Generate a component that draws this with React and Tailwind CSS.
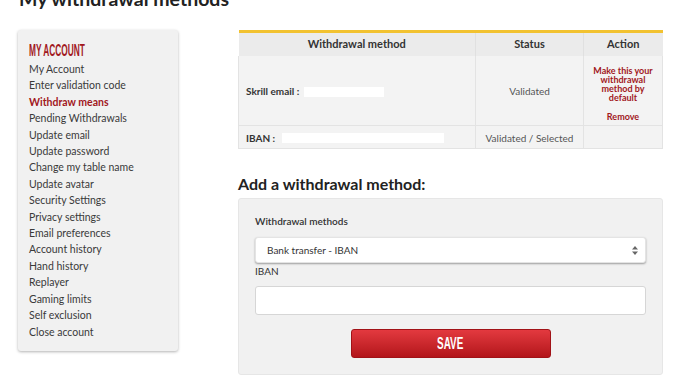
const menu = [
  "My Account",
  "Enter validation code",
  "Withdraw means",
  "Pending Withdrawals",
  "Update email",
  "Update password",
  "Change my table name",
  "Update avatar",
  "Security Settings",
  "Privacy settings",
  "Email preferences",
  "Account history",
  "Hand history",
  "Replayer",
  "Gaming limits",
  "Self exclusion",
  "Close account",
];

function Sidebar() {
  return (
    <div className="self-start w-[160px] shrink-0 bg-[#f1f1f1] rounded-[3px] shadow-[0_1px_3px_rgba(0,0,0,0.3)] pl-[11px] pt-[11px] pb-[11px]">
      <div className="text-[#a1181d] text-[16px] leading-[19px] mb-[1px] font-bold font-['Liberation_Sans',sans-serif] origin-left scale-x-[0.52] whitespace-nowrap">
        MY ACCOUNT
      </div>
      <ul>
        {menu.map((m) => (
          <li
            key={m}
            className={`text-[10.5px] leading-[16.4px] whitespace-nowrap ${m === "Withdraw means" ? "text-[#a1181d] font-bold" : "text-[#3a3a3a]"}`}
          >
            {m}
          </li>
        ))}
      </ul>
    </div>
  );
}

function MethodsTable() {
  return (
    <table className="w-[425px] border-collapse text-[10px] text-[#333] border-t-[3px] border-[#f2c230]">
      <thead>
        <tr className="bg-[#ebebeb] h-[24px]">
          <th className="w-[237px] font-bold text-[11px] border-r border-[#e0e0e0]">Withdrawal method</th>
          <th className="w-[108px] font-bold text-[11px] border-r border-[#e0e0e0]">Status</th>
          <th className="font-bold text-[11px]">Action</th>
        </tr>
      </thead>
      <tbody>
        <tr className="bg-[#f3f3f3] h-[70px] border-b border-[#e3e3e3]">
          <td className="pl-[7px] pt-[3px] border-r border-[#e3e3e3] border-l">
            <div className="flex items-center">
              <span className="font-bold">Skrill email :</span>
              <span className="ml-[5px] w-[80px] h-[10px] bg-white"></span>
            </div>
          </td>
          <td className="text-center pt-[3px] text-[#555] border-r border-[#e3e3e3]">Validated</td>
          <td className="text-center text-[#a1181d] font-bold text-[9px] leading-[9.3px] px-[8px] pt-[6px] border-r border-[#e3e3e3]">
            <div>Make this your withdrawal method by default</div>
            <div className="mt-[9px]">Remove</div>
          </td>
        </tr>
        <tr className="bg-[#f3f3f3] h-[23px] border-b border-[#e3e3e3]">
          <td className="pl-[7px] pt-[2px] border-r border-l border-[#e3e3e3]">
            <div className="flex items-center">
              <span className="font-bold">IBAN :</span>
              <span className="ml-[7px] w-[162px] h-[10px] bg-white"></span>
            </div>
          </td>
          <td className="text-center pt-[2px] text-[#555] border-r border-[#e3e3e3]">Validated / Selected</td>
          <td className="border-r border-[#e3e3e3]"></td>
        </tr>
      </tbody>
    </table>
  );
}

function AddForm() {
  return (
    <div className="w-[425px] bg-[#f1f1f1] border border-[#e6e6e6] rounded-[3px] px-[16px] pt-[16px] pb-[16px]">
      <div className="text-[10px] font-semibold text-[#333] leading-[13px]">Withdrawal methods</div>
      <div className="mt-[9px] h-[26px] bg-white rounded-[3px] border border-[#e4e4e4] shadow-[0_1px_2px_rgba(0,0,0,0.35)] flex items-center justify-between pl-[11px] pr-[6px]">
        <span className="text-[10px] text-[#333]">Bank transfer - IBAN</span>
        <svg width="8" height="11" viewBox="0 0 8 11" className="text-[#666]">
          <path d="M4 1 L7 4.5 L1 4.5 Z" fill="currentColor" />
          <path d="M4 10 L7 6.5 L1 6.5 Z" fill="currentColor" />
        </svg>
      </div>
      <div className="mt-[2px] text-[10px] text-[#333] leading-[13px]">IBAN</div>
      <div className="mt-[8px] h-[29px] bg-white rounded-[3px] border border-[#d6d6d6]"></div>
      <div className="mt-[14px] flex justify-center">
        <button className="w-[200px] h-[29px] rounded-[3px] bg-gradient-to-b from-[#e3393f] to-[#b3141a] border border-[#a11217] text-white flex items-center justify-center">
          <span className="inline-block text-[16px] leading-[16px] font-bold font-['Liberation_Sans',sans-serif] scale-x-[0.62]">SAVE</span>
        </button>
      </div>
    </div>
  );
}

export default function App() {
  return (
    <div className="w-[700px] h-[383px] overflow-hidden bg-white font-['Lato','Open_Sans',sans-serif]">
      <h1 className="mt-[-13px] ml-[19px] text-[19.5px] leading-[24px] font-bold text-[#222]">My withdrawal methods</h1>
      <div className="flex mt-[19px] ml-[18px]">
        <Sidebar />
        <div className="ml-[60px] flex flex-col">
          <MethodsTable />
          <h2 className="mt-[25px] text-[16px] leading-[20px] font-bold text-[#222]">Add a withdrawal method:</h2>
          <div className="mt-[4px]">
            <AddForm />
          </div>
        </div>
      </div>
    </div>
  );
}
